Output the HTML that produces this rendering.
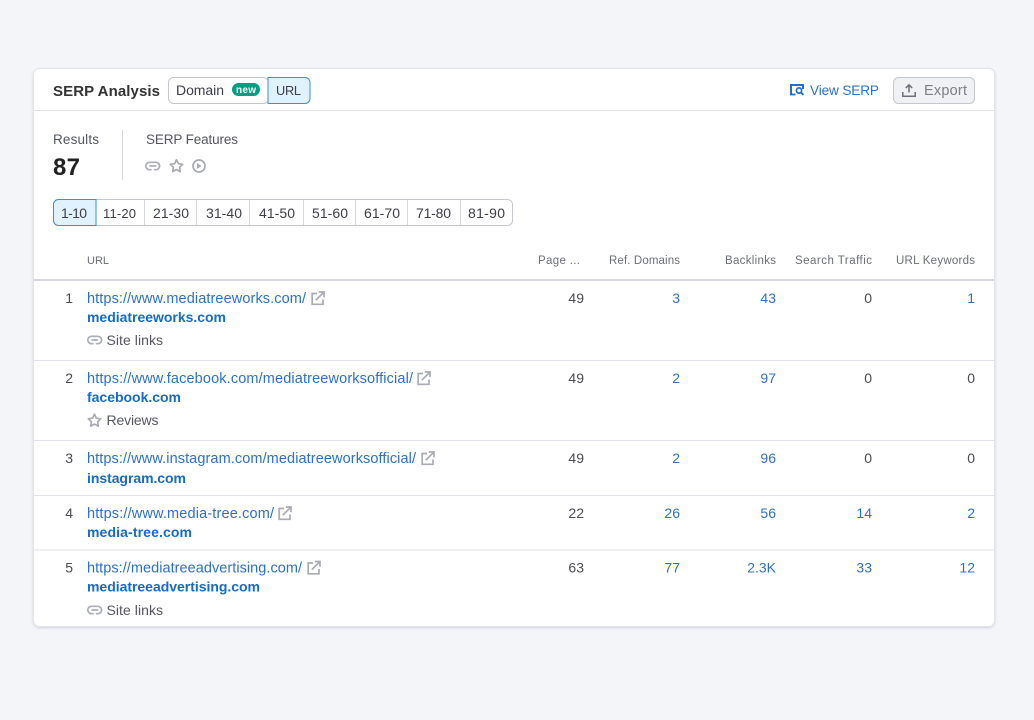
<!DOCTYPE html>
<html><head><meta charset="utf-8"><style>
html,body{margin:0;padding:0;background:#f4f5f9;width:1034px;height:720px;overflow:hidden}
svg{display:block}
text{font-family:"Liberation Sans",sans-serif;font-size:14px;fill:#3d3e46}
.h{font-size:11.500px;fill:#6c6e79}
.l{fill:#2f70c6;font-size:14.500px}
.b{font-weight:700;fill:#166bca;font-size:14px}
.n{text-anchor:end;fill:#4a4b53}
.m{text-anchor:end;fill:#2f70c6}
.g{fill:#55565f}
</style></head><body>
<svg width="1034" height="720" viewBox="0 0 1034 720" xmlns="http://www.w3.org/2000/svg">
<defs>
<filter id="s" x="-2%" y="-2%" width="104%" height="104%"><feDropShadow dx="0" dy="1" stdDeviation="1.2" flood-color="#191b23" flood-opacity=".14"/></filter>
<g id="ext" fill="none" stroke="#a9abb5" stroke-width="1.700">
<path d="M6 2.500H1.200v10.800H12V8.500"/><path d="M4.800 9.200 12.200 1.800"/><path d="M7.800 1h5.200v5.200"/>
</g>
<g id="lnk" fill="none" stroke="#abadb7" stroke-width="1.700" stroke-linecap="round">
<path d="M6 9.700H4.500a3.700 3.700 0 0 1 0-7.400h6.400a3.700 3.700 0 0 1 3.700 3.700"/>
<path d="M5 6h5.500"/><path d="M9.500 9.700h1.400a3.700 3.700 0 0 0 3.700-3.700"/>
</g>
<path id="star" fill="none" stroke="#a9abb5" stroke-width="1.700" stroke-linejoin="round" d="M7.500 1.300 9.400 5.200l4.300.6-3.100 3 .7 4.300-3.800-2-3.800 2 .7-4.300-3.100-3 4.300-.6z"/>
</defs>

<rect x="33.500" y="68.500" width="961" height="558" rx="6" fill="#fff" stroke="#e3e4e9" filter="url(#s)"/>
<rect x="34" y="110" width="960" height="1" fill="#e0e1e9"/>

<text x="53" y="96" style="font-size:15px;font-weight:700;fill:#333" textLength="107">SERP Analysis</text>

<rect x="168.500" y="77.500" width="100" height="26" rx="5" fill="#fff" stroke="#c4c7cf"/>
<text x="176" y="95" textLength="48">Domain</text>
<rect x="232" y="83" width="28" height="13" rx="6.500" fill="#009f81"/>
<text x="236" y="93" textLength="20" style="font-size:10px;font-weight:700;fill:#fff">new</text>
<path d="M268 77.500h37a5 5 0 0 1 5 5v16a5 5 0 0 1-5 5h-37z" fill="#e0f1ff" stroke="#3e8fd8"/>
<text x="276" y="95" textLength="25" style="font-size:12.800px">URL</text>

<path d="M791 95V85h12v4" fill="none" stroke="#1e6fce" stroke-width="2"/>
<path d="M790 94.500h5.500" fill="none" stroke="#1e6fce" stroke-width="1.800"/>
<circle cx="799" cy="90.500" r="2.600" fill="#fff" stroke="#1e6fce" stroke-width="1.700"/>
<path d="M801 92.500l2.500 2.500" stroke="#1e6fce" stroke-width="1.900"/>
<text x="810" y="95" textLength="69" style="fill:#2f70c6;font-size:13.600px">View SERP</text>

<rect x="893.500" y="77.500" width="81" height="26" rx="5" fill="#f0f1f4" stroke="#c4c7cf"/>
<path d="M902.800 92v4.200h12.400V92" fill="none" stroke="#6c6e79" stroke-width="1.500"/>
<path d="M909 92.500v-7.500M905.800 88l3.200-3.200 3.200 3.200" fill="none" stroke="#6c6e79" stroke-width="1.500"/>
<text x="924" y="95" textLength="43" style="fill:#7d7f89;font-size:14.500px">Export</text>

<text x="53" y="144" textLength="46" style="font-size:13.500px;fill:#55565f">Results</text>
<text x="53" y="175" style="font-size:24px;font-weight:700;fill:#222" textLength="27">87</text>
<rect x="122" y="130" width="1" height="50" fill="#d5d7de"/>
<text x="146" y="144" textLength="92" style="font-size:13.500px;fill:#55565f">SERP Features</text>
<use href="#lnk" x="145" y="160"/>
<use href="#star" x="169" y="158.500"/>
<circle cx="199" cy="166" r="6" fill="none" stroke="#a9abb5" stroke-width="1.700"/>
<path d="M197 163v6l4.500-3z" fill="#a9abb5"/>

<rect x="53.500" y="199.500" width="459" height="26" rx="5" fill="#fff" stroke="#c4c7cf"/>
<path d="M96 199.500H58.500a5 5 0 0 0-5 5v16a5 5 0 0 0 5 5H96z" fill="#e0f1ff" stroke="#3e8fd8"/>
<g fill="#d5d7de">
<rect x="144" y="200" width="1" height="25"/><rect x="196" y="200" width="1" height="25"/>
<rect x="249" y="200" width="1" height="25"/><rect x="303" y="200" width="1" height="25"/>
<rect x="355" y="200" width="1" height="25"/><rect x="407" y="200" width="1" height="25"/>
<rect x="460" y="200" width="1" height="25"/>
</g>
<text x="61" y="218" textLength="26">1-10</text>
<text x="103" y="218" textLength="33" style="font-size:13px">11-20</text>
<text x="153" y="218" textLength="36">21-30</text>
<text x="206" y="218" textLength="36">31-40</text>
<text x="259" y="218" textLength="36">41-50</text>
<text x="312" y="218" textLength="36">51-60</text>
<text x="364" y="218" textLength="36">61-70</text>
<text x="416" y="218" textLength="35">71-80</text>
<text x="468" y="218" textLength="37">81-90</text>

<text class="h" x="87" y="264" textLength="22" style="font-size:11px">URL</text>
<text class="h" x="538" y="264" textLength="42">Page ...</text>
<text class="h" x="609" y="264" textLength="71">Ref. Domains</text>
<text class="h" x="725" y="264" textLength="51">Backlinks</text>
<text class="h" x="795" y="264" textLength="77">Search Traffic</text>
<text class="h" x="896" y="264" textLength="79">URL Keywords</text>
<rect x="34" y="279" width="960" height="2" fill="#d5d7de"/>

<!-- row 1 -->
<text class="n" x="73" y="303">1</text>
<text class="l" x="87" y="303" textLength="219">https://www.mediatreeworks.com/</text>
<use href="#ext" x="311" y="291"/>
<text class="b" x="87" y="322" textLength="139">mediatreeworks.com</text>
<use href="#lnk" x="87" y="334"/>
<text class="g" x="106.500" y="345" textLength="56.500">Site links</text>
<text class="n" x="584" y="303">49</text><text class="m" x="680" y="303">3</text><text class="m" x="776" y="303">43</text><text class="n" x="872" y="303">0</text><text class="m" x="975" y="303">1</text>
<rect x="34" y="360" width="960" height="1" fill="#e0e1e9"/>

<!-- row 2 -->
<text class="n" x="73" y="383">2</text>
<text class="l" x="87" y="383" textLength="326">https://www.facebook.com/mediatreeworksofficial/</text>
<use href="#ext" x="417" y="371"/>
<text class="b" x="87" y="402" textLength="94">facebook.com</text>
<use href="#star" x="87" y="413"/>
<text class="g" x="106.500" y="425" textLength="52">Reviews</text>
<text class="n" x="584" y="383">49</text><text class="m" x="680" y="383">2</text><text class="m" x="776" y="383">97</text><text class="n" x="872" y="383">0</text><text class="n" x="975" y="383">0</text>
<rect x="34" y="440" width="960" height="1" fill="#e0e1e9"/>

<!-- row 3 -->
<text class="n" x="73" y="463">3</text>
<text class="l" x="87" y="463" textLength="329">https://www.instagram.com/mediatreeworksofficial/</text>
<use href="#ext" x="421" y="451"/>
<text class="b" x="87" y="483" textLength="99">instagram.com</text>
<text class="n" x="584" y="463">49</text><text class="m" x="680" y="463">2</text><text class="m" x="776" y="463">96</text><text class="n" x="872" y="463">0</text><text class="n" x="975" y="463">0</text>
<rect x="34" y="495" width="960" height="1" fill="#e0e1e9"/>

<!-- row 4 -->
<text class="n" x="73" y="518">4</text>
<text class="l" x="87" y="518" textLength="187">https://www.media-tree.com/</text>
<use href="#ext" x="278" y="506"/>
<text class="b" x="87" y="537" textLength="105">media-tree.com</text>
<text class="n" x="584" y="518">22</text><text class="m" x="680" y="518">26</text><text class="m" x="776" y="518">56</text><text class="m" x="872" y="518">14</text><text class="m" x="975" y="518">2</text>
<rect x="34" y="549.500" width="960" height="1" fill="#e0e1e9"/>

<!-- row 5 -->
<text class="n" x="73" y="572.500">5</text>
<text class="l" x="87" y="572.500" textLength="215">https://mediatreeadvertising.com/</text>
<use href="#ext" x="307" y="560.500"/>
<text class="b" x="87" y="591.500" textLength="173">mediatreeadvertising.com</text>
<use href="#lnk" x="87" y="604"/>
<text class="g" x="106.500" y="615" textLength="56.500">Site links</text>
<text class="n" x="584" y="572.500">63</text><text class="m" x="680" y="572.500">77</text><text class="m" x="776" y="572.500">2.3K</text><text class="m" x="872" y="572.500">33</text><text class="m" x="975" y="572.500">12</text>
</svg>
</body></html>
